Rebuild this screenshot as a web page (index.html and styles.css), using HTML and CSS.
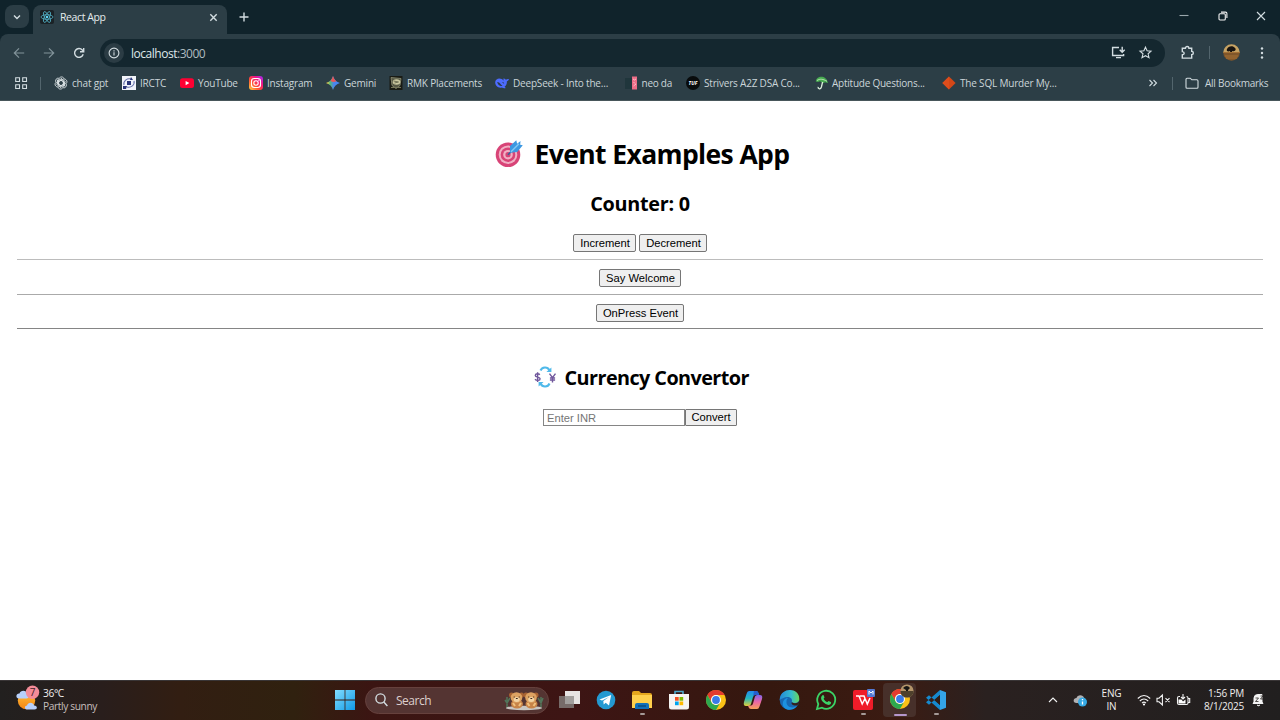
FILE: index.html
```html
<!DOCTYPE html>
<html lang="en">
<head>
<meta charset="utf-8">
<title>React App</title>
<link rel="stylesheet" href="styles.css">
</head>
<body>
<div class="screen">
  <header class="tabstrip">
    <div class="tab-search"><svg width="10" height="10" viewBox="0 0 10 10"><path d="M2 3.5l3 3 3-3" class="line bold"/></svg></div>
    <div class="tab">
      <svg class="react" width="14" height="14" viewBox="0 0 14 14"><rect width="14" height="14" rx="2" fill="#1b2226"/><g fill="none" stroke="#55b9cf" stroke-width=".75"><ellipse cx="7" cy="7" rx="6" ry="2.3"/><ellipse cx="7" cy="7" rx="6" ry="2.3" transform="rotate(60 7 7)"/><ellipse cx="7" cy="7" rx="6" ry="2.3" transform="rotate(120 7 7)"/></g><circle cx="7" cy="7" r="1.2" fill="#61dafb"/></svg>
      <span class="tab-title">React App</span>
      <svg width="9" height="9" viewBox="0 0 9 9"><path d="M1.300 1.300l6.400 6.400M7.700 1.300L1.300 7.700" class="line bold"/></svg>
    </div>
    <svg class="new-tab" width="10" height="10" viewBox="0 0 10 10"><path d="M5 .5v9M.5 5h9" class="line bold"/></svg>
    <div class="window-controls">
      <svg width="10" height="10" viewBox="0 0 10 10"><path d="M.5 4.500h9" class="line dim"/></svg>
      <svg width="10" height="10" viewBox="0 0 10 10"><rect x="1" y="2.700" width="6.300" height="6.300" rx="1" class="line white"/><path d="M3 1.100h4.500q1.400 0 1.400 1.400V7" class="line white"/></svg>
      <svg width="10" height="10" viewBox="0 0 10 10"><path d="M1 1l8 8M9 1L1 9" class="line"/></svg>
    </div>
  </header>

  <nav class="toolbar">
    <svg width="12" height="12" viewBox="0 0 12 12"><path d="M11.200 6H1.300M6 1.300L1.300 6 6 10.700" class="line muted"/></svg>
    <svg width="12" height="12" viewBox="0 0 12 12"><path d="M.8 6h9.900M6 1.300L10.700 6 6 10.700" class="line muted"/></svg>
    <svg width="12" height="12" viewBox="0 0 12 12"><path d="M10.200 7.300A4.400 4.400 0 1 1 9.300 3L10.500 4.300" class="line bold"/><path d="M10.700 1v3.700H7" class="line bold"/></svg>
    <div class="omnibox">
      <span class="site-info"><svg width="12" height="12" viewBox="0 0 12 12"><circle cx="6" cy="6" r="4.900" class="line"/><path d="M6 5.300v3.200M6 3.300v1.100" class="line"/></svg></span>
      <span class="url">localhost<span class="port">:3000</span></span>
      <svg width="15" height="13" viewBox="0 0 15 13"><path d="M8 1.500H1.600v8h11V8M5 11.600h5" class="line bold"/><path d="M11.200.8v5.100M8.700 3.800l2.500 2.400 2.500-2.400" class="line bold"/></svg>
      <svg width="13" height="13" viewBox="0 0 13 13"><path d="M6.500 1.200l1.600 3.600 3.900.4-2.900 2.600.9 3.900-3.500-2-3.500 2L4 7.800 1 5.200l3.900-.4z" class="line"/></svg>
    </div>
    <svg class="extensions" width="15" height="15" viewBox="0 0 15 15"><path d="M2.300 3.200h3.100c0-2.200 3.500-2.200 3.500 0h2.800v3.200c2.200 0 2.200 3.200 0 3.200v3.500H2.300V9.800c2.500-.3 2.500-3 0-3.200z" class="line bold"/></svg>
    <i class="divider"></i>
    <svg class="avatar" width="17" height="17" viewBox="0 0 17 17"><defs><clipPath id="round"><circle cx="8.500" cy="8.500" r="8.300"/></clipPath></defs><g clip-path="url(#round)"><rect width="17" height="9" fill="#c6a263"/><rect y="8" width="17" height="9" fill="#80562a"/><path d="M0 8.500h17M2 12h13M3 14h11" fill="none" stroke="#b47d3b" stroke-width=".7"/><path d="M4 5c1-3 6-4 8-1 2 2-1 4-3 3v1H7.200L7 7C5 8 3 7 4 5z" fill="#18130f"/></g></svg>
    <svg class="menu" width="4" height="14" viewBox="0 0 4 14"><g fill="#d3dde1"><circle cx="2" cy="2.500" r="1.200"/><circle cx="2" cy="7" r="1.200"/><circle cx="2" cy="11.500" r="1.200"/></g></svg>
  </nav>

  <nav class="bookmarks">
    <svg width="14" height="14" viewBox="0 0 14 14"><path d="M1.700 1.700h3.800v3.800H1.700zM8.700 1.700h3.800v3.800H8.700zM1.700 8.700h3.800v3.800H1.700zM8.700 8.700h3.800v3.800H8.700z" class="line"/></svg>
    <i class="divider"></i>
    <a class="bm"><svg viewBox="0 0 14 14"><g fill="none" stroke="#dce3e6" stroke-width=".85"><path id="knot" d="M4.700 8.400V4C4.700.5 9-.1 10 2.600M4.700 5.500L8 3.500l3.600 2.100"/><use href="#knot" transform="rotate(60 7 7)"/><use href="#knot" transform="rotate(120 7 7)"/><use href="#knot" transform="rotate(180 7 7)"/><use href="#knot" transform="rotate(240 7 7)"/><use href="#knot" transform="rotate(300 7 7)"/></g></svg><span>chat gpt</span></a>
    <a class="bm"><svg viewBox="0 0 14 14"><path d="M0 0h14v14H0z" fill="#f2f4fa"/><g fill="none" stroke="#6570a8" stroke-width="1.100"><path d="M2 9c-1-4 3-7 7-6M12 5c1 4-3 7-7 6"/></g><path d="M5 5h4v4H5zM9 1l2 3H8zM1 10h4l-1 3H1z" fill="#293578"/></svg><span>IRCTC</span></a>
    <a class="bm"><svg viewBox="0 0 14 14"><rect y="2.300" width="14" height="9.600" rx="2.500" fill="#ff0033"/><path d="M5.600 5v4.200L9.400 7z" fill="#fff"/></svg><span>YouTube</span></a>
    <a class="bm"><svg viewBox="0 0 14 14"><defs><linearGradient id="ig" x1="0" y1="1" x2="1" y2="0"><stop stop-color="#ffd43e"/><stop offset=".4" stop-color="#ff4b35"/><stop offset=".7" stop-color="#f0128a"/><stop offset="1" stop-color="#982fff"/></linearGradient></defs><rect width="14" height="14" rx="3" fill="url(#ig)"/><rect x="2.500" y="2.500" width="9" height="9" rx="2.700" fill="none" stroke="#fff" stroke-width="1.100"/><circle cx="7" cy="7" r="2.200" fill="none" stroke="#fff" stroke-width="1.100"/><circle cx="9.800" cy="4.200" r=".6" fill="#fff"/></svg><span>Instagram</span></a>
    <a class="bm"><svg viewBox="0 0 14 14"><defs><linearGradient id="gem"><stop offset=".08" stop-color="#ffd34c"/><stop offset=".3" stop-color="#50b879"/><stop offset=".55" stop-color="#4d85e9"/><stop offset="1" stop-color="#3b86ff"/></linearGradient></defs><path d="M7 0Q8.600 5.400 14 7 8.600 8.600 7 14 5.400 8.600 0 7 5.400 5.400 7 0" fill="url(#gem)"/><path d="M7 0q1 4.200 3.500 5.600L7 6 4.400 5Q6.200 3.400 7 0" fill="#ea5555"/></svg><span>Gemini</span></a>
    <a class="bm"><svg viewBox="0 0 14 14"><path d="M.5 0h13v14H.5z" fill="#191b14"/><path d="M2 1.500l10 1-1 7-4 3-4-3z" fill="#555744" stroke="#8f9175" stroke-width=".8"/><ellipse cx="7.500" cy="6" rx="3.800" ry="2.800" fill="#cac8a0"/><path d="M4.500 5l5 1-4 1M2 11.500h10" stroke="#737458" fill="none"/></svg><span>RMK Placements</span></a>
    <a class="bm"><svg viewBox="0 0 14 14"><path d="M.2 6c.4-3 3.500-4.500 6.500-3 1 .5 1.300 1.200 2.300 1.600-.8-1-.7-2.200 0-2.400.5.900 1.500 1.300 2.200 1.300.8 0 1.500-.9 2.800-.5-.4 1.300-1 2-2.100 2.300.2 3-1 4.700-2.400 5.500l1.300 1.100c-1.500.5-2.700.2-4-.4C3.300 12.400 0 9.800.2 6z" fill="#4d6bfe"/><path d="M2.200 6c2.200-.3 4.200 3.400 5.300 3.800C5.500 10.800 2.800 9 2.200 6zM7 6q2-.5 2.200 2z" fill="#2a3b45"/></svg><span>DeepSeek - Into the...</span></a>
    <a class="bm neo"><svg viewBox="0 0 14 14"><path d="M0 2h7v11H0z" fill="#20363c"/><path d="M7 .5h5v13H7z" fill="#ed6d87"/><path d="M8 3l1.500 1L11 3M8.500 6l1.500 1.500M8.500 10L11 8" stroke="#ffd0d9" fill="none" stroke-width=".8"/></svg><span>neo da</span></a>
    <a class="bm"><svg viewBox="0 0 14 14"><circle cx="7" cy="7" r="7" fill="#080b0c"/><text x="7" y="8.900" class="tuf-label" text-anchor="middle">TUF</text></svg><span>Strivers A2Z DSA Co...</span></a>
    <a class="bm apt"><svg viewBox="0 0 14 14"><path d="M.8 5.500C1 0 11-2 13 7L10 6.200 8 7.300 5 5.300 3 6z" fill="#47aa50"/><path d="M7.600 6L6.400 11c-.8 2.800-3.600 2-3.300-.2" fill="none" stroke="#dcefdc" stroke-width="1.300"/><path d="M2 4.500C5 2.500 8 3 12 5.300" stroke="#c3eabb" fill="none" stroke-width=".9"/></svg><span>Aptitude Questions...</span></a>
    <a class="bm"><svg viewBox="0 0 14 14"><path d="M7 .4L13.600 7 7 13.600.4 7z" fill="#d44717"/><path d="M7 .4V13.600L.4 7z" fill="#de4d1c"/></svg><span>The SQL Murder My...</span></a>
    <svg width="10" height="10" viewBox="0 0 10 10"><path d="M1.500 2l3 3-3 3M5.500 2l3 3-3 3" class="line"/></svg>
    <i class="divider"></i>
    <a class="bm all"><svg viewBox="0 0 14 14"><path d="M1 3.200q0-1 1-1h3.300l1.500 1.600h5q1.200 0 1.200 1.200v6.200q0 1-1 1H2q-1 0-1-1z" class="line"/></svg><span>All Bookmarks</span></a>
  </nav>

  <main class="page">
    <h1><svg width="28" height="28" viewBox="0 0 28 28"><circle cx="13" cy="14.700" r="12.300" fill="#d84477"/><circle cx="13" cy="14.700" r="9.300" fill="#f1b0c4"/><circle cx="13" cy="14.700" r="7.300" fill="#d84477"/><circle cx="13" cy="14.700" r="4.800" fill="#f1b0c4"/><circle cx="13" cy="14.700" r="2.600" fill="#d84477"/><path d="M13 14.700l6-6" stroke="#33659d" stroke-width="1.600"/><path d="M15 12.800V6L21.300.3l.8 3.500L25.500.9l-.3 3.800 2.600.5-5.600 6.800z" fill="#3c98e2"/><path d="M16 11.800l8-8" stroke="#82c8f5" stroke-width="1.400"/></svg><span>Event Examples App</span></h1>
    <h2 class="counter">Counter: 0</h2>
    <div class="row counter-row"><button class="inc">Increment</button><button class="dec">Decrement</button></div>
    <hr class="pale">
    <div class="row"><button class="welcome">Say Welcome</button></div>
    <hr class="mid">
    <div class="row press-row"><button class="press">OnPress Event</button></div>
    <hr>
    <h2 class="currency"><svg width="22" height="22" viewBox="0 0 22 22"><g fill="none" stroke="#4fb9ea" stroke-width="2.100"><path d="M6.500 4.500C8 .8 13.500.3 15.300 4.200M15.500 17.500C14 21.200 8.500 21.700 6.700 17.800"/></g><path d="M12.400 6h5V1.500zM9.600 16h-5v4.500z" fill="#4fb9ea"/><path d="M5.800 8.700C4.500 7.200 1.300 7.600 1.300 9.400c0 2.100 4.800 1.300 4.800 3.300 0 2-3.600 2.200-5.100.6M3.600 6.300v9.700M15.500 7.700l3 4 3-4M18.500 11.700v4.800M15.900 12h5.200M15.900 14h5.200" fill="none" stroke="#70579c" stroke-width="1.400"/></svg><span>Currency Convertor</span></h2>
    <div class="row convert-row"><input type="text" placeholder="Enter INR"><button class="convert">Convert</button></div>
  </main>

  <footer class="taskbar">
    <div class="weather">
      <svg width="24" height="26" viewBox="0 0 24 26"><defs><linearGradient id="sun" x1="0" y1="0" x2="0" y2="1"><stop stop-color="#ffc03b"/><stop offset="1" stop-color="#f58512"/></linearGradient></defs><circle cx="10.500" cy="14.500" r="8.700" fill="url(#sun)"/><path d="M3 12.500c-4-.3-3-5.500.5-5C4.500 3.500 11 4 11 8c3 1 2 4.500-.5 4.500zM11 23.500c-3-.3-2.500-4 0-4 1-4 6.500-3.500 7 0 3.500-.3 4 4 .5 4z" fill="#b7d0fb"/><circle cx="16.500" cy="6.300" r="6.700" fill="#f48b98"/><text x="16.500" y="10" text-anchor="middle" class="badge-label">7</text></svg>
      <div><span class="temp">36°C</span><span class="condition">Partly sunny</span></div>
    </div>
    <div class="apps">
      <svg width="20" height="20" viewBox="0 0 20 20"><defs><linearGradient id="win" x1="0" y1="0" x2="1" y2="1"><stop stop-color="#82dcff"/><stop offset="1" stop-color="#109ae6"/></linearGradient></defs><path d="M0 0h9.600v9.600H0zM10.400 0H20v9.600h-9.600zM0 10.400h9.600V20H0zM10.400 10.400H20V20h-9.600z" fill="url(#win)"/></svg>
      <div class="search"><svg width="13" height="14" viewBox="0 0 13 14"><circle cx="5.500" cy="5.500" r="4.600" class="line bold"/><path d="M8.800 9l3.600 4" class="line bold"/></svg><span>Search</span><svg class="bears" width="40" height="22" viewBox="0 0 40 22"><ellipse cx="20" cy="19" rx="18" ry="2.200" fill="#c9c6c2"/><path d="M3 18V8M1 11l2 3 3-5M37 18V8M39 9l-2 5-3-5" stroke="#52755a" stroke-width="1.500" fill="none"/><g id="bear"><ellipse cx="13" cy="15" rx="6" ry="4.500" fill="#c78348"/><circle cx="7.500" cy="6" r="2.500" fill="#a86232"/><circle cx="17.500" cy="6" r="2.500" fill="#a86232"/><ellipse cx="12.500" cy="8.500" rx="5.800" ry="5.300" fill="#dda262"/><ellipse cx="12.700" cy="10.500" rx="3" ry="2.500" fill="#f2d3a4"/><path d="M9.700 8h1M14.700 8h1M11.900 9.500h1.800" stroke="#3b241a" stroke-width="1.100"/><path d="M9 14l2 3M17 14l-2 3" stroke="#f1c17e" stroke-width="2"/></g><use href="#bear" x="14.500"/></svg></div>
      <svg width="21" height="20" viewBox="0 0 21 20"><path d="M6 1h15v13H6z" fill="#e6e4e3"/><path d="M0 6h15v12H0z" fill="#8a8885" opacity=".75"/></svg>
      <svg width="20" height="20" viewBox="0 0 20 20"><circle cx="10" cy="10" r="9.300" fill="#2499d1"/><path d="M3.500 9.500l11.700-4.600L13 15.400l-3.300-2.600-2 1.800-.4-3.500L13 7l-7 3.600z" fill="#fff"/></svg>
      <div class="running"><svg width="22" height="20" viewBox="0 0 22 20"><path d="M1 3q0-2 2-2h5l2 2h9q2 0 2 2v13H1z" fill="#e6a71e"/><path d="M1 5h20v13H1z" fill="#ffd04d"/><path d="M4 15q0-2 2-2h10q2 0 2 2v4H4z" fill="#1270ba"/><path d="M7 16h8" stroke="#0a4b80" stroke-width="1.500"/></svg></div>
      <svg width="20" height="20" viewBox="0 0 20 20"><path d="M6 5V1.500h8V5" fill="none" stroke="#4ca8cc" stroke-width="1.600"/><path d="M0 4h20v13q0 2.500-2.500 2.500h-15Q0 19.500 0 17z" fill="#f5f4f3"/><path d="M6 7h3.700v3.700H6z" fill="#f25022"/><path d="M10.500 7h3.700v3.700h-3.700z" fill="#7fba00"/><path d="M6 11.500h3.700v3.700H6z" fill="#00a4ef"/><path d="M10.500 11.500h3.700v3.700h-3.700z" fill="#ffb900"/></svg>
      <svg width="20" height="20" viewBox="0 0 20 20"><g id="chrome"><circle cx="10" cy="10" r="10" fill="#fbc116"/><path d="M1.340 5A10 10 0 0 1 18.660 5H10A5 5 0 0 0 5.670 12.500z" fill="#e33b2e"/><path d="M1.340 5A10 10 0 0 0 10 20l4.330-7.500A5 5 0 0 1 5.670 12.500z" fill="#2da94f"/><circle cx="10" cy="10" r="5" fill="#fff"/><circle cx="10" cy="10" r="3.900" fill="#397be8"/></g></svg>
      <svg width="20" height="20" viewBox="0 0 20 20"><defs><linearGradient id="coA" x1="0" y1="0" x2="0" y2="1"><stop stop-color="#218bf0"/><stop offset=".5" stop-color="#26b8bc"/><stop offset="1" stop-color="#e2cf38"/></linearGradient><linearGradient id="coB" x1="0" y1="0" x2="0" y2="1"><stop stop-color="#8165e9"/><stop offset=".5" stop-color="#ec67a5"/><stop offset="1" stop-color="#f7a057"/></linearGradient></defs><path d="M6 1h7q2 0 2.500 2l.7 2H12q-1.500 0-2 2l-2 7q-.6 2-2.500 2H3q-3 0-2-4l2.500-8Q4.300 1 6 1z" fill="url(#coA)"/><path d="M14 19H8q-2 0-2.500-2L5 15.500h3q1.500 0 2-2l2-7Q12.500 5 14.500 5H17q3 0 2 4l-2.500 7.500Q15.700 19 14 19z" fill="url(#coB)"/><path d="M11 1h2q2 0 2.500 2l.7 2H12q-1.500 0-2 2z" fill="#255fce"/></svg>
      <svg width="21" height="20" viewBox="0 0 21 20"><defs><linearGradient id="edge"><stop stop-color="#2389d8"/><stop offset=".6" stop-color="#36bccd"/><stop offset="1" stop-color="#68d65a"/></linearGradient></defs><circle cx="10.500" cy="10" r="9.800" fill="#1868b3"/><path d="M.7 10C1-3 20.500-3 20.300 9c0 4-4.300 5-7.500 3.300 1-3-1-5.300-4-5.300C5 7 2 9 .7 10z" fill="url(#edge)"/><path d="M7.500 11c-.7 6 5.500 8 10.500 5-5.500 7-16 3.500-14-4 .5-2 2.500-4 5-4-1 .8-1.500 2-1.500 3z" fill="#1c91e1"/><path d="M12.800 12.300c3 2 7.500.7 7.500-2.300.6 3-1 5.500-3.500 5.500-3 0-5-1.500-4-3.200z" fill="#34201a"/></svg>
      <svg width="20" height="20" viewBox="0 0 20 20"><path d="M1 19l1.300-5A9 9 0 1 1 6 17.700z" fill="none" stroke="#3bd366" stroke-width="1.800"/><path d="M6.300 5.500c.7-.8 1.400-.5 1.600.2l.6 1.700-.9 1.300c1 1.900 2.300 2.800 3.900 3.400l1-1.200 2.300 1c.7.300.1 2-.7 2.500-2 1.300-5-.2-7-2.300-1.900-2-2.900-4.600-.8-6.600z" fill="#3bd366"/></svg>
      <div class="running"><svg width="20" height="20" viewBox="0 0 20 20"><rect width="20" height="20" rx="2" fill="#f01c29"/><path d="M3 6h3l3.200 8L12 8.500l2.300 5.500L17 8M7 6h4l1 2.500" fill="none" stroke="#fff" stroke-width="1.500"/><rect x="14" y="-1" width="8" height="8" rx="1" fill="#547ad4"/><path d="M16 4.500V1l2 2 2-2v3.500" stroke="#fff" fill="none"/></svg></div>
      <div class="active-app"><svg width="26" height="26" viewBox="0 0 26 26"><g transform="translate(0 5)"><use href="#chrome"/></g><circle cx="17" cy="7" r="6.600" fill="#b4956a"/><path d="M10.400 7h13.200a6.600 6.600 0 0 1-13.200 0" fill="#4e402c"/><path d="M13 4q4-4 7 0l-2 2v1h-2V6z" fill="#171513"/></svg></div>
      <div class="running"><svg width="20" height="20" viewBox="0 0 20 20"><path d="M14 0l6 2.300v15.400L14 20z" fill="#34a4e7"/><path d="M14 0v5L3 14.800 0 12.300zM14 20v-5L3 5.200 0 7.700z" fill="#1689ce"/><path d="M14 5v10L8.300 10z" fill="#2e1c16"/></svg></div>
    </div>
    <div class="tray">
      <svg width="10" height="8" viewBox="0 0 10 8"><path d="M1 6l4-4 4 4" class="line white"/></svg>
      <svg width="15" height="14" viewBox="0 0 15 14"><path d="M3.500 10C-.5 10 0 5 3.500 5 4.500 1 10.500 1.500 11 5l2 3-5 2z" fill="#b0b1b3"/><circle cx="9.500" cy="9" r="4.500" fill="#36a9e4"/><path d="M9.500 8.500v3M9.500 6v1.300" stroke="#fff" stroke-width="1.300"/></svg>
      <div class="lang"><span>ENG</span><span>IN</span></div>
      <svg width="15" height="12" viewBox="0 0 15 12"><path d="M.8 4.500q6.200-6 12.400 0M2.800 7q4.200-4 8.400 0M5 9.200q2-2 4 0" class="line white"/><circle cx="7" cy="10.500" r="1.100" fill="#fff"/></svg>
      <svg width="14" height="12" viewBox="0 0 14 12"><path d="M0 4.200h2L5.400 1v10L2 7.800H0zM8.500 4.200l4 4M12.500 4.200l-4 4" class="line white"/></svg>
      <svg width="15" height="13" viewBox="0 0 15 13"><path d="M3 2.500H2Q.5 2.500.5 4v5Q.5 10.500 2 10.500h7.500Q11 10.500 11 9V4q0-1.500-1.500-1.500M11.500 4.500h1.200v4h-1.200" class="line white"/><path d="M1.500 5.500h3L6 7.500l2.500-2v4h-7z" fill="#fff"/><path d="M6 0v5M4 3l2 2 2-2" class="line white"/></svg>
      <div class="clock"><span>1:56 PM</span><span>8/1/2025</span></div>
      <svg width="13" height="14" viewBox="0 0 13 14"><path d="M1 10.500L2 9V5q0-3.500 4-3.500h4V9l1 1.500zM5 12q1.500 1.500 3 0" fill="#f3f3f3" stroke="#f3f3f3"/><path d="M3.500 5h3L3.500 8.500h3M8.500 3h2.500L8.500 6H11" fill="none" stroke="#292522" stroke-width=".8"/></svg>
    </div>
  </footer>
</div>
</body>
</html>
```
FILE: styles.css
```css
* { box-sizing: border-box; }
body { margin: 0; font-family: "Open Sans", "Noto Sans", sans-serif; }
svg { display: block; flex: none; overflow: visible; }
.screen { width: 1280px; height: 720px; display: grid; grid-template-rows: 34px 37px 30px 579px 40px; background: #fff; overflow: hidden; }
.line { fill: none; stroke: #d3dde1; stroke-width: 1.1; }
.bold { stroke-width: 1.4; }
.white { stroke: #f3f3f3; }
.dim { stroke: #9aa7ad; }
.muted { stroke: #82939a; stroke-width: 1.2; }
.divider { width: 1px; height: 13px; background: #53656d; }

.tabstrip { display: flex; align-items: flex-start; padding: 5px 14px 0 5px; background: #10232b; color: #e4ebed; }
.tab-search { width: 24px; height: 23px; border-radius: 8px; background: #2b3d45; display: grid; place-items: center; }
.tab { margin-left: 4px; width: 194px; height: 29px; padding: 0 9px 5px 7px; border-radius: 8px 8px 0 0; background: #2c3e46; display: flex; align-items: center; gap: 6px; }
.tab-title { flex: 1; font-size: 10.5px; letter-spacing: -.4px; }
.new-tab { margin: 7px 0 0 12px; }
.window-controls { margin: 6px 0 0 auto; display: flex; gap: 28.5px; }

.toolbar { display: flex; align-items: center; padding: 0 16px 0 12.5px; background: #2c3e46; border-radius: 8px 8px 0 0; box-shadow: 0 -1px 0 7px #10232b; clip-path: inset(0); color: #dfe7ea; }
.toolbar > svg:nth-child(-n+2) { margin-right: 18px; }
.omnibox { margin-left: 15.5px; width: 1065px; height: 28px; padding: 0 13px 0 4px; border-radius: 14px; background: #14272f; display: flex; align-items: center; gap: 13px; }
.site-info { width: 20px; height: 20px; border-radius: 50%; background: #2b3c44; display: grid; place-items: center; }
.url { margin: 1px 0 0 -6px; flex: 1; font-size: 12px; letter-spacing: -.48px; }
.port { color: #aebbc0; }
.extensions { margin: 0 14px 0 15px; }
.avatar { margin: 0 20px 0 13px; }

.bookmarks { display: grid; grid-template-columns: 26px 13.5px 68px 58px 69px 77px 63px 106px 130px 61px 129px 127px 206px 24px 13px 84px; align-items: center; padding: 0 11px 5px 14px; background: #2c3e46; border-bottom: 1px solid #48565a; color: #cbd5d9; font-size: 10px; letter-spacing: -.19px; }
.bm { display: flex; align-items: center; gap: 4.5px; white-space: nowrap; }
.bm svg { width: 14px; height: 14px; }
.neo { gap: 3px; letter-spacing: -.25px; }
.apt { gap: 3.5px; letter-spacing: -.24px; }
.all { gap: 6.5px; letter-spacing: -.25px; }
.tuf-label { font: italic bold 5px "Open Sans", sans-serif; letter-spacing: 0; fill: #fff; }

.page { display: flex; flex-direction: column; padding: 35px 17px 0; color: #000; text-align: center; }
h1, h2 { margin: 0; display: flex; justify-content: center; align-items: center; font-family: "Open Sans", "Noto Sans", sans-serif; font-weight: 700; white-space: nowrap; }
h1 { height: 36px; margin-left: 4px; gap: 12px; font-size: 26.5px; letter-spacing: -.62px; }
h2 { height: 28px; font-size: 19.8px; letter-spacing: -.25px; }
.counter { margin-top: 17px; }
.row { display: flex; justify-content: center; gap: 3px; height: 18px; margin: 9px 0 7px; }
.counter-row { margin: 17px 0 7px; }
.press-row { margin-bottom: 6px; }
button { height: 18px; padding: 0 0 0 1px; border: 1px solid #767676; border-radius: 2px; background: #efefef; color: #000; font: 11.2px "Liberation Sans", Arial, sans-serif; line-height: 15px; white-space: nowrap; }
.inc { width: 63px; } .dec { width: 68px; } .welcome { width: 82px; } .press { width: 88px; } .convert { width: 52px; }
hr { width: 1246px; height: 1px; margin: 0; border: 0; background: #858585; flex: none; }
.pale { background: #bcbcbc; }
.mid { background: #aaa; }
.currency { margin: 34px 0 0 3px; gap: 8.5px; letter-spacing: -.56px; }
.convert-row { gap: 0; margin-top: 18px; }
input { width: 142px; height: 17px; padding: 0 3px; border: 1px solid #858585; font: 11.2px "Liberation Sans", Arial, sans-serif; }
.convert { height: 17px; padding: 0; border-radius: 1px; }
input::placeholder { color: #757575; }

.taskbar { display: grid; grid-template-columns: 335px 1fr 233px; align-items: center; color: #f0eeee; background: linear-gradient(90deg, #22201f, #291e1c 8%, #321e12 14%, #30210f 23%, #3b1512 29%, #3d1514 45%, #35180f 60%, #3b1b12 70%, #2a2120 77%, #211f1f); border-top: 1px solid #393536; }
.weather { display: flex; align-items: center; gap: 3px; padding-left: 16px; margin-top: -4px; }
.weather div { display: grid; margin-top: 3px; line-height: 13px; font-size: 10.2px; letter-spacing: -.38px; }
.condition { color: #c6bfbd; }
.badge-label { font: 10px "Open Sans", sans-serif; fill: #3d2027; }
.apps { display: grid; grid-template-columns: 30px 194px 37px 36px 37px 37px 37px 36px 37px 37px 30px 43px 40px; align-items: center; margin-top: -1px; }
.search { width: 184px; height: 27px; display: flex; align-items: center; border: 1px solid #66413d; border-radius: 14px; background: #543432; padding: 0 4px 0 9px; }
.search span { margin-left: 8px; flex: 1; font-size: 12px; letter-spacing: -.5px; color: #dccfcd; }
.running { width: 20px; display: grid; justify-content: center; justify-items: center; gap: 3px; padding-top: 5px; }
.running::after { content: ""; width: 5px; height: 2px; border-radius: 1px; background: #a59a97; }
.active-app { width: 33px; height: 34px; background: #47302a; border-radius: 4px; padding: 1px 0 1px 7px; display: grid; align-content: space-between; }
.active-app::after { content: ""; width: 13px; height: 2px; margin-left: 4px; border-radius: 1px; background: #b697cb; }
.tray { display: grid; grid-template-columns: 25px 29px 35px 20px 20px 18px 57px 13px; align-items: center; margin-top: -1px; padding-left: .5px; }
.clock, .lang { display: grid; line-height: 13px; font-size: 10px; letter-spacing: -.2px; white-space: nowrap; }
.lang { justify-items: center; width: 20px; }
.clock { justify-items: end; width: 49.5px; }
```
